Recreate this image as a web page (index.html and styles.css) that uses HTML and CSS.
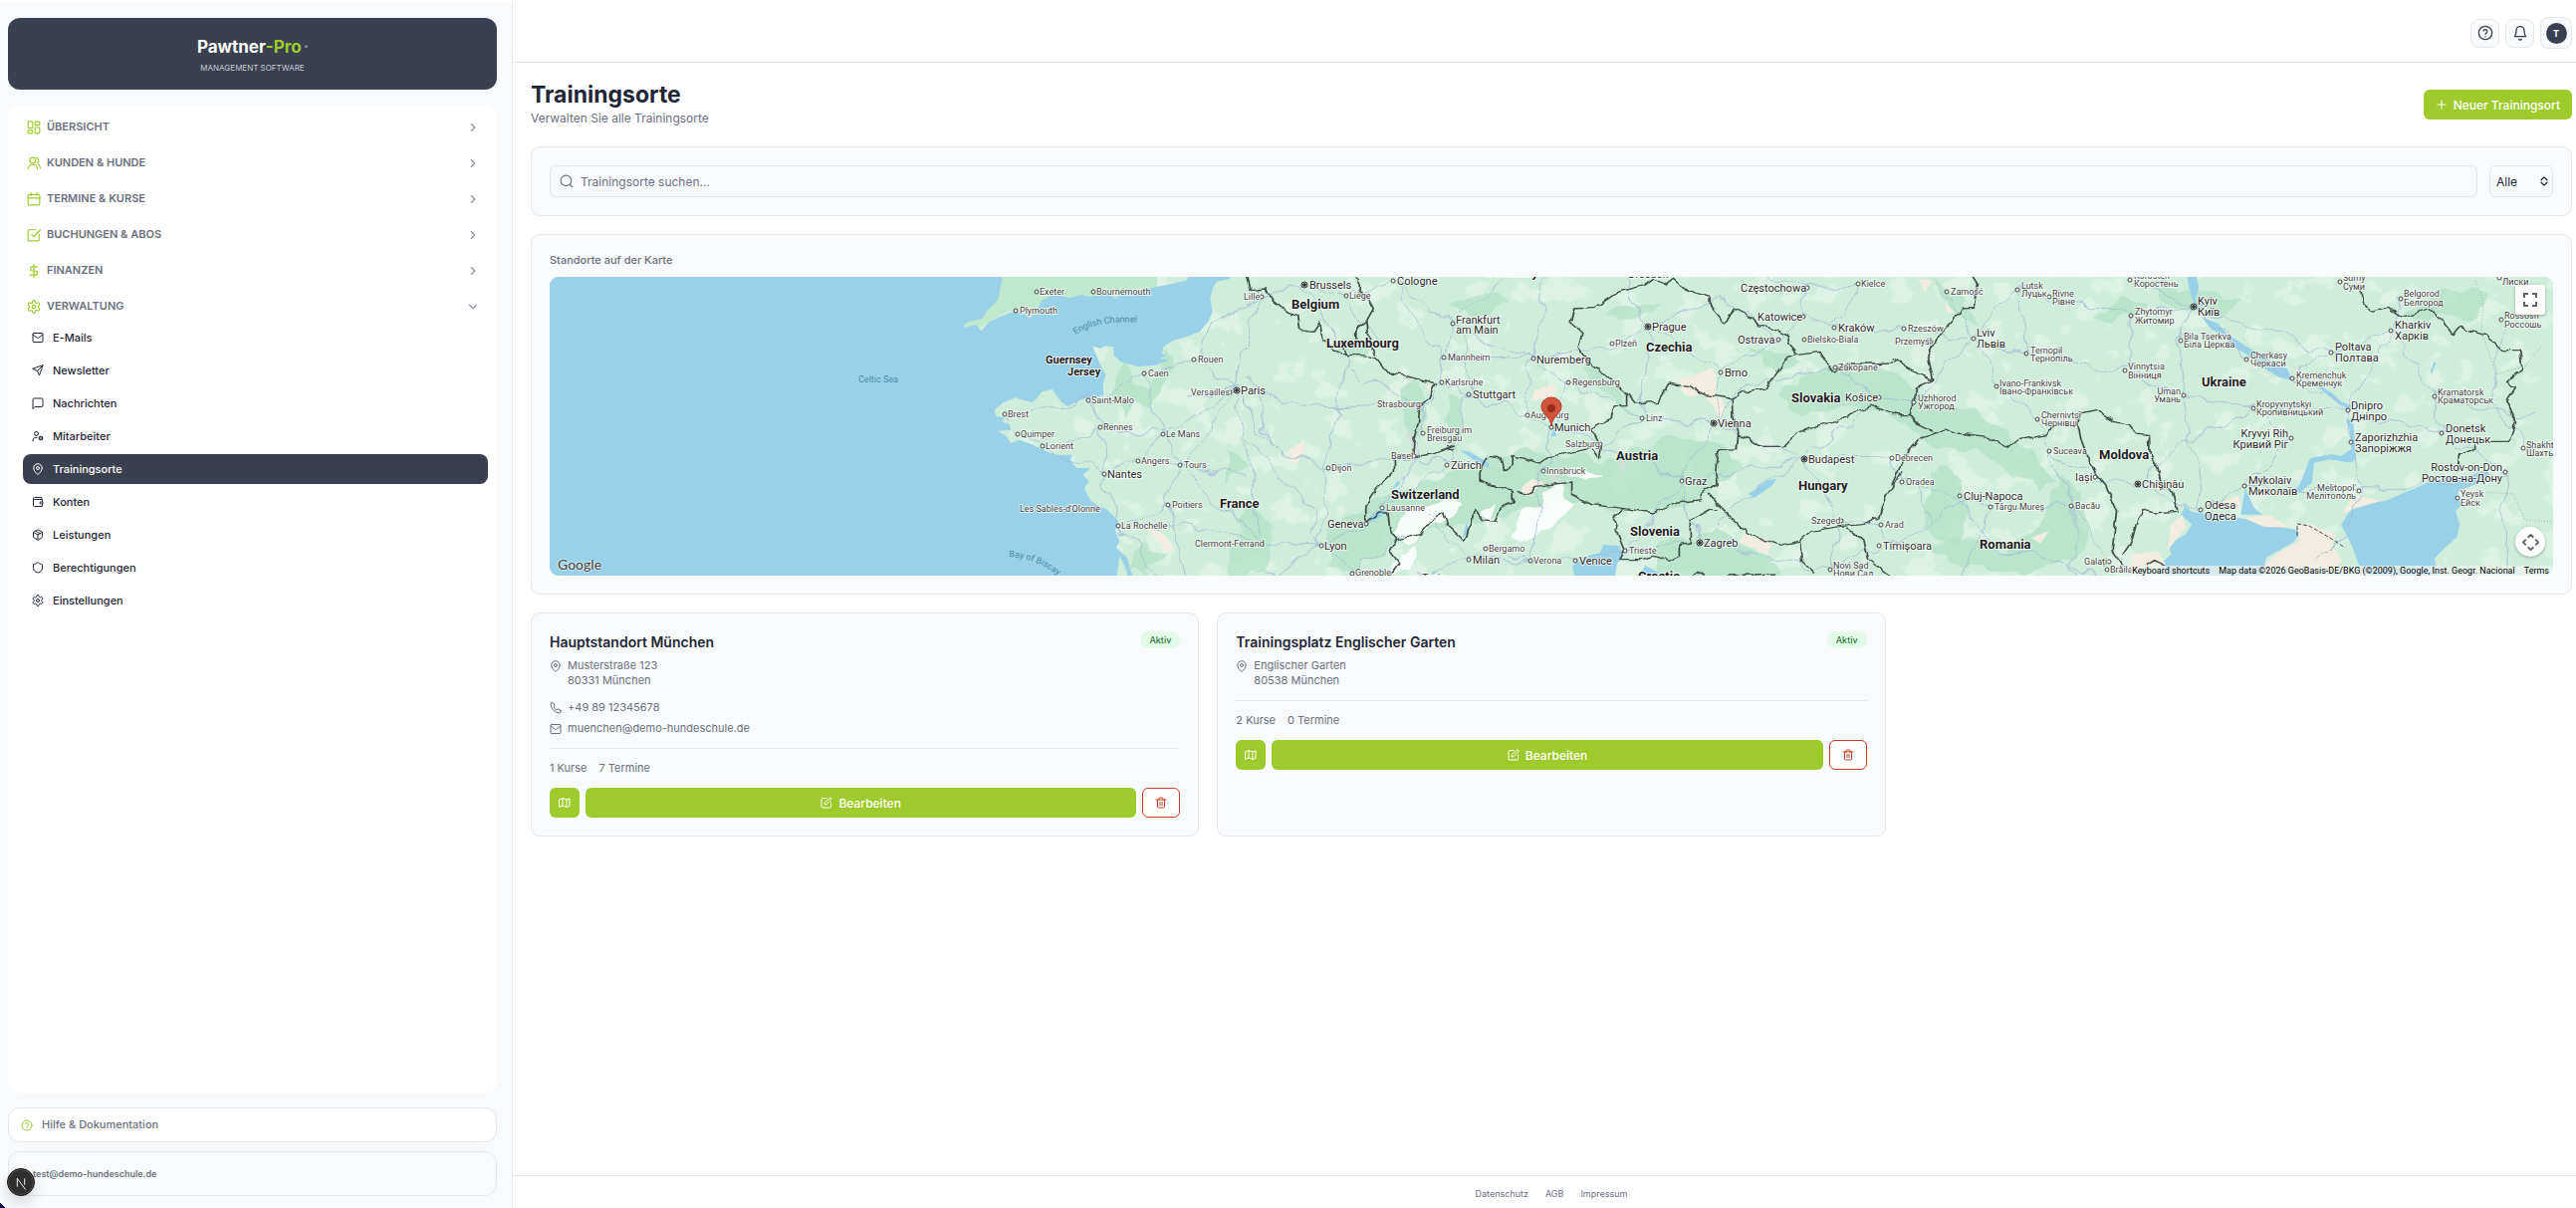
FILE: index.html
```html
<!DOCTYPE html>
<html lang="de">
<head>
<meta charset="utf-8">
<meta name="viewport" content="width=device-width, initial-scale=1">
<title>Trainingsorte – Pawtner-Pro</title>
<link rel="stylesheet" href="styles.css">
</head>
<body>
<svg class="sprite" aria-hidden="true">
  <symbol id="i-dashboard" viewBox="0 0 24 24"><rect x="2" y="2" width="8" height="11" rx="1"/><rect x="14" y="2" width="8" height="6" rx="1"/><rect x="14" y="12" width="8" height="10" rx="1"/><rect x="2" y="17" width="8" height="5" rx="1"/></symbol>
  <symbol id="i-users" viewBox="0 0 24 24"><path d="M18 22a8 8 0 0 0-16 0"/><circle cx="10" cy="7" r="5"/><path d="M23 21c0-3.370-2-6.500-4-8M16 2a5 5 0 0 1 2 9"/></symbol>
  <symbol id="i-calendar" viewBox="0 0 24 24"><rect x="2" y="4" width="20" height="18" rx="2"/><path d="M7 1v5M17 1v5M2 10h20"/></symbol>
  <symbol id="i-check" viewBox="0 0 24 24"><path d="M21 11v9a2 2 0 0 1-2 2H4a2 2 0 0 1-2-2V5a2 2 0 0 1 2-2h12"/><path d="m8 11 4 4L23 3"/></symbol>
  <symbol id="i-dollar" viewBox="0 0 24 24"><path d="M12 1v22M18 5H9.500a3.500 3.500 0 0 0 0 7h5a3.500 3.500 0 0 1 0 7H5"/></symbol>
  <symbol id="i-gear" viewBox="0 0 24 24"><path d="M12.220 1h-.440a2 2 0 0 0-2 2v.8a2 2 0 0 1-1 1.730l-.430.250a2 2 0 0 1-2 0l-.6-.3a2 2 0 0 0-2.730.730l-.5.9a2 2 0 0 0 .730 2.730l.5.3a2 2 0 0 1 1 1.720v.510a2 2 0 0 1-1 1.740l-.5.3a2 2 0 0 0-.730 2.730l.5.9a2 2 0 0 0 2.730.730l.6-.3a2 2 0 0 1 2 0l.430.250a2 2 0 0 1 1 1.730V21a2 2 0 0 0 2 2h.440a2 2 0 0 0 2-2v-.8a2 2 0 0 1 1-1.730l.430-.250a2 2 0 0 1 2 0l.6.3a2 2 0 0 0 2.730-.730l.5-.9a2 2 0 0 0-.730-2.730l-.5-.3a2 2 0 0 1-1-1.740v-.5a2 2 0 0 1 1-1.740l.5-.3a2 2 0 0 0 .730-2.730l-.5-.9a2 2 0 0 0-2.730-.730l-.6.3a2 2 0 0 1-2 0l-.430-.250a2 2 0 0 1-1-1.730V3a2 2 0 0 0-2-2z"/><circle cx="12" cy="12" r="3"/></symbol>
  <symbol id="i-mail" viewBox="0 0 24 24"><rect x="2" y="3" width="20" height="18" rx="2"/><path d="m2 6 8.500 6.500a2.500 2.500 0 0 0 3 0L22 6"/></symbol>
  <symbol id="i-send" viewBox="0 0 24 24"><path d="M22 2 15 22l-4-9-9-4zM22 2 11 13"/></symbol>
  <symbol id="i-message" viewBox="0 0 24 24"><path d="M22 17a2 2 0 0 1-2 2H6l-4 4V4a2 2 0 0 1 2-2h16a2 2 0 0 1 2 2z"/></symbol>
  <symbol id="i-usercog" viewBox="0 0 24 24"><circle cx="9" cy="7" r="4"/><path d="M10 15H7a5 5 0 0 0-5 5v2"/><circle cx="18" cy="16" r="3"/><path d="M18 12v1M18 19v1M22 16h-1M15 16h-1M21 13l-1 1M16 18l-1 1M15 13l1 1M20 18l1 1"/></symbol>
  <symbol id="i-pin" viewBox="0 0 24 24"><path d="M20.500 10c0 5.500-5.500 10.500-7.600 12.400a1.500 1.500 0 0 1-1.800 0C9 20.500 3.500 15.500 3.500 10a8.500 8.500 0 0 1 17 0"/><circle cx="12" cy="10" r="3"/></symbol>
  <symbol id="i-wallet" viewBox="0 0 24 24"><path d="M20 7V4a1 1 0 0 0-1-1H5a2 2 0 0 0 0 4h15a1 1 0 0 1 1 1v4h-3a2 2 0 0 0 0 4h3a1 1 0 0 0 1-1v-2a1 1 0 0 0-1-1"/><path d="M3 5v14a2 2 0 0 0 2 2h15a1 1 0 0 0 1-1v-4"/></symbol>
  <symbol id="i-box" viewBox="0 0 24 24"><path d="M21 8a2 2 0 0 0-1-1.730l-7-4a2 2 0 0 0-2 0l-7 4A2 2 0 0 0 3 8v8a2 2 0 0 0 1 1.730l7 4a2 2 0 0 0 2 0l7-4A2 2 0 0 0 21 16zM3.300 7 12 12l8.700-5M12 22V12M7.500 4.300l9 5.100"/></symbol>
  <symbol id="i-shield" viewBox="0 0 24 24"><path d="M21 13c0 5-3.500 7.500-8.500 9a1 1 0 0 1-1 0C6.500 20.500 3 18 3 13V6a1 1 0 0 1 1-1c2 0 5-1.200 7-3a1.200 1.200 0 0 1 2 0c2 1.800 5 3 7 3a1 1 0 0 1 1 1z"/></symbol>
  <symbol id="i-help" viewBox="0 0 24 24"><circle cx="12" cy="12" r="10"/><path d="M9 9a3 3 0 0 1 5.800 1c0 2-2.800 2.500-2.800 4M12 17.500v.1"/></symbol>
  <symbol id="i-bell" viewBox="0 0 24 24"><path d="M10 21.500a2.200 2.200 0 0 0 4 0M3.500 17.500h17c-.8-1.200-2.500-2.500-2.500-9a6 6 0 0 0-12 0c0 6.500-1.700 7.800-2.500 9z"/></symbol>
  <symbol id="i-search" viewBox="0 0 24 24"><circle cx="11" cy="11" r="9"/><path d="m22 22-4-4"/></symbol>
  <symbol id="i-right" viewBox="0 0 24 24"><path d="m9 18 6-6-6-6"/></symbol>
  <symbol id="i-down" viewBox="0 0 24 24"><path d="m6 9 6 6 6-6"/></symbol>
  <symbol id="i-updown" viewBox="0 0 24 24"><path d="m5 9 7-7 7 7M5 15l7 7 7-7"/></symbol>
  <symbol id="i-plus" viewBox="0 0 24 24"><path d="M12 4v16M4 12h16"/></symbol>
  <symbol id="i-phone" viewBox="0 0 24 24"><path d="M22 17v3a2 2 0 0 1-2.200 2A19.800 19.800 0 0 1 2 4.200 2 2 0 0 1 4 2h3a2 2 0 0 1 2 1.700c.1 1 .4 1.900.7 2.800a2 2 0 0 1-.450 2.100L8 9.900a16 16 0 0 0 6 6l1.300-1.300a2 2 0 0 1 2.100-.4c.9.3 1.800.6 2.800.7A2 2 0 0 1 22 17z"/></symbol>
  <symbol id="i-map" viewBox="0 0 24 24"><path d="M2 5.500 8 3l8 3 6-2.500v15L16 21l-8-3-6 2.500zM8 3v15M16 6v15"/></symbol>
  <symbol id="i-edit" viewBox="0 0 24 24"><path d="M12 3H4a2 2 0 0 0-2 2v15a2 2 0 0 0 2 2h15a2 2 0 0 0 2-2v-8"/><path d="M18.500 2.500a2 2 0 0 1 3 3L12.500 15 8 16l1-4.500z"/></symbol>
  <symbol id="i-trash" viewBox="0 0 24 24"><path d="M2 6h20M19 6v14a2 2 0 0 1-2 2H7a2 2 0 0 1-2-2V6M8 6V4a2 2 0 0 1 2-2h4a2 2 0 0 1 2 2v2M10 11v6M14 11v6"/></symbol>
</svg>

<div class="app">
  <aside class="sidebar">
    <a class="brand" href="#">
      <span class="brand-name">Pawtner<span class="brand-accent">-Pro</span><sup>®</sup></span>
      <span class="brand-sub">MANAGEMENT SOFTWARE</span>
    </a>
    <nav class="nav">
      <button class="group" type="button"><svg class="icon"><use href="#i-dashboard"/></svg><span>ÜBERSICHT</span><svg class="icon chev"><use href="#i-right"/></svg></button>
      <button class="group" type="button"><svg class="icon"><use href="#i-users"/></svg><span>KUNDEN &amp; HUNDE</span><svg class="icon chev"><use href="#i-right"/></svg></button>
      <button class="group" type="button"><svg class="icon"><use href="#i-calendar"/></svg><span>TERMINE &amp; KURSE</span><svg class="icon chev"><use href="#i-right"/></svg></button>
      <button class="group" type="button"><svg class="icon"><use href="#i-check"/></svg><span>BUCHUNGEN &amp; ABOS</span><svg class="icon chev"><use href="#i-right"/></svg></button>
      <button class="group" type="button"><svg class="icon"><use href="#i-dollar"/></svg><span>FINANZEN</span><svg class="icon chev"><use href="#i-right"/></svg></button>
      <div class="section">
        <button class="group" type="button" aria-expanded="true"><svg class="icon"><use href="#i-gear"/></svg><span>VERWALTUNG</span><svg class="icon chev"><use href="#i-down"/></svg></button>
        <ul class="items">
          <li><a href="#"><svg class="icon"><use href="#i-mail"/></svg>E-Mails</a></li>
          <li><a href="#"><svg class="icon"><use href="#i-send"/></svg>Newsletter</a></li>
          <li><a href="#"><svg class="icon"><use href="#i-message"/></svg>Nachrichten</a></li>
          <li><a href="#"><svg class="icon"><use href="#i-usercog"/></svg>Mitarbeiter</a></li>
          <li><a href="#" class="active" aria-current="page"><svg class="icon"><use href="#i-pin"/></svg>Trainingsorte</a></li>
          <li><a href="#"><svg class="icon"><use href="#i-wallet"/></svg>Konten</a></li>
          <li><a href="#"><svg class="icon"><use href="#i-box"/></svg>Leistungen</a></li>
          <li><a href="#"><svg class="icon"><use href="#i-shield"/></svg>Berechtigungen</a></li>
          <li><a href="#"><svg class="icon"><use href="#i-gear"/></svg>Einstellungen</a></li>
        </ul>
      </div>
    </nav>
    <div class="side-foot">
      <a class="help" href="#"><svg class="icon"><use href="#i-help"/></svg>Hilfe &amp; Dokumentation</a>
      <div class="user">test@demo-hundeschule.de</div>
    </div>
  </aside>

  <div class="page">
    <header class="topbar">
      <button class="tool" type="button" aria-label="Hilfe"><svg class="icon"><use href="#i-help"/></svg></button>
      <button class="tool" type="button" aria-label="Benachrichtigungen"><svg class="icon"><use href="#i-bell"/></svg></button>
      <button class="tool account" type="button" aria-label="Konto"><span>T</span></button>
    </header>

    <main class="content">
      <div class="heading">
        <div>
          <h1>Trainingsorte</h1>
          <p>Verwalten Sie alle Trainingsorte</p>
        </div>
        <button class="btn primary" type="button"><svg class="icon"><use href="#i-plus"/></svg>Neuer Trainingsort</button>
      </div>

      <section class="card filters">
        <label class="search"><svg class="icon"><use href="#i-search"/></svg><input type="text" placeholder="Trainingsorte suchen..." aria-label="Trainingsorte suchen"></label>
        <label class="choice"><select aria-label="Status"><option>Alle</option><option>Aktiv</option><option>Inaktiv</option></select><svg class="icon"><use href="#i-updown"/></svg></label>
      </section>

      <section class="card map-card">
        <h2>Standorte auf der Karte</h2>
        <div class="map">
          <svg class="map-canvas" viewBox="0 0 2012 300" preserveAspectRatio="xMidYMid slice" role="img" aria-label="Karte der Standorte">
            <defs>
              <filter id="woods" x="0" y="0" width="100%" height="100%">
                <feTurbulence type="fractalNoise" baseFrequency=".030 .036" numOctaves="4" seed="11"/>
                <feColorMatrix values="0 0 0 0 .71  0 0 0 0 .89  0 0 0 0 .78  0 0 0 14 -8.100"/>
              </filter>
              <filter id="jag" x="-2%" y="-2%" width="104%" height="104%">
                <feTurbulence type="fractalNoise" baseFrequency=".12" numOctaves="1" seed="4"/>
                <feDisplacementMap in="SourceGraphic" scale="7" xChannelSelector="R" yChannelSelector="G"/>
              </filter>
              <filter id="wind" x="-2%" y="-2%" width="104%" height="104%">
                <feTurbulence type="fractalNoise" baseFrequency=".04" numOctaves="2" seed="8"/>
                <feDisplacementMap in="SourceGraphic" scale="22" xChannelSelector="R" yChannelSelector="G"/>
              </filter>
              <marker id="town" viewBox="0 0 6 6" markerWidth="6" markerHeight="6" refX="3" refY="3" markerUnits="userSpaceOnUse"><circle cx="3" cy="3" r="2" fill="#fff" stroke="#444" stroke-width="1"/></marker>
              <marker id="capital" viewBox="0 0 8 8" markerWidth="8" markerHeight="8" refX="4" refY="4" markerUnits="userSpaceOnUse"><circle cx="4" cy="4" r="3" fill="#fff" stroke="#333" stroke-width="1"/><circle cx="4" cy="4" r="2" fill="#333"/></marker>
              <path id="channel" d="M528 58Q550 43 590 46"/>
              <path id="biscay" d="M461 281Q490 283 512 301"/>
            </defs>
            <rect width="2012" height="300" fill="#ceeddb"/>
            <rect x="440" width="1572" height="300" filter="url(#woods)"/>
            <path d="M410 0h200v34H460l-50 30z" fill="#bfe8cd"/>

            <!-- mountain forests -->
            <g fill="#afe0c3" fill-opacity=".65" filter="url(#wind)">
              <path d="M930 190l40-18 60 8 40 2 60-22 50 8 14 24-20 16-30 20-60 8-60-10-60 14-60 10-50 18-50 30-30-8 10-40 50-30z"/>
              <path d="M1235 120l30-25 50-8 40 8 40 30 40 10 50 40 30 30-20 12-50-38-60-12-30-24-60-12-40 6z"/>
              <path d="M1520 200l20 30 6 40-30 20-40 6-60-4-30-20 20-12 50 12 40-20z"/>
              <path d="M1390 190l30 14 6 40-20 26-26-20z"/>
              <path d="M1060 40l24-14 30 2-30 16zM1040 80l30 30 20 28-20-8-30-32zM900 30l40-18 20 14-30 20zM855 110l20-10 4 50-14 20zM905 120l14 4-6 50-14-10z"/>
              <path d="M1110 265l60-10 60 30 10 20h-130zM1200 70l40 6 20 16-40-4zM795 60l30 4-6 20-20-6z"/>
              <path d="M560 120l40-10 20-40 6 20-20 44zM680 170l20 20-20 20zM590 270l30 10-20 20h-20zM700 230l26 20-6 50h-40zM575 84l20 30-16 30-14-30z"/>
              <path d="M1620 10l80 14-20 14-60-10zM1550 40l30-20 30 10-40 16zM1390 0l30 20 14 30-24-12zM1860 40l40-30 50 8-20 24z"/>
            </g>
            <!-- alpine relief -->
            <g filter="url(#wind)">
              <path fill="#fff" fill-opacity=".85" d="M858 240l40-18 18 6-20 20-34 20-14-8zM965 255l20-20 30-26 10 20-20 20-24 20zM930 234l18-8-8 28zM1020 198l16-6 20 8-20 8zM850 276l20-8-8 30h-14z"/>
              <path fill="#f3ece0" d="M972 215l20-14 8 12-14 10zM1130 104l30-8 16 12-10 22-22-14zM1160 124l20-6 4 16-14 10zM992 112l20-2-6 12-12 2zM598 254l14 2 16 16-14 6zM1200 256l30 14-10 8-26-14zM738 176l18-8-8 16zM880 104l12 2-6 8z"/>
              <path fill="#d9dcdd" fill-opacity=".7" d="M860 154l8 2 2 24-10-4zM1070 190l14 4-8 6zM1002 196l14 8-12 6z"/>
            </g>

            <!-- seas and lakes -->
            <g fill="#99d1e8">
              <path transform="translate(-12 -18) scale(.44 .3333)" d="M-10 44H1062L1055 95 1050 125 1025 155 1015 180 985 188 970 200 975 207 1000 198 1012 217 1022 203 1030 190 1055 175 1085 160 1110 165 1125 178 1130 165 1142 150 1150 125 1170 112 1190 110 1215 118 1240 108 1260 114 1275 110 1300 100 1318 120 1330 108 1345 92 1380 97 1410 85 1440 77 1480 65 1490 44H1580V60L1550 68 1540 90 1535 120 1540 160 1530 190 1510 220 1480 235 1450 245 1428 265 1425 285 1435 290 1420 300 1440 306 1410 320 1370 325 1330 310 1315 290 1315 265 1295 262 1285 270 1265 262 1275 290 1285 320 1296 350 1290 380 1292 412 1250 420 1230 430 1210 445 1195 430 1182 408 1175 393 1150 400 1140 420 1128 432 1110 425 1090 418 1060 435 1043 455 1045 475 1065 477 1060 490 1078 500 1080 515 1050 518 1070 535 1080 555 1100 545 1130 560 1155 575 1180 590 1220 590 1215 605 1230 630 1262 630 1245 650 1258 670 1248 690 1260 725 1280 745 1300 755 1325 790 1318 820 1328 850 1320 870 1345 900 1362 975H1352L1340 925 1328 895 1320 975H-10z"/>
              <path d="M1029 300l-2-10 16-10 12-3 3-8 16 1 4 10-6 8-2 12zM1094 300l6-10 12 6 4 4z"/>
              <path d="M1204 218l20-14 8-1-4 6-18 13zM818 247l14-12 12-1-8 6-10 6zM914 174l10 2 18 10 2 6-10-4zM846 214l6-10 2 4zM917 262l4-16 2 10zM1005 160l4-8 2 8z"/>
              <path transform="translate(1348 -18) scale(.438 .3333)" d="M663 770l25 30-15 30-40 30 8 30-18 20 5 60h220l10-70 60-45 24-35-40-10-50-12-45-16-120-20-14-18zM1030 800l20-40 30-25 50-5 70-40 42-24 30-6 60-8 30-18 10 20-22 18-50 28-6 20 14 20-16 20 10 38-6 40-30 34-22 30 10 70-150-10-30-30-20-70zM935 680l24-80 50-12 20 6 24-20-3-60-9-28 16-6 7 120-10 14-50-10-36 10-5 60-28 30-16-6zM1046 452l-20-16-26-26-20-20-16-6 16-4 30 24 20 26 24 12zM918 365l-30-8-32-26-12-16-40-35-25-20-16-28-30-20-25-40-14-30-14-60-4-38h20l8 40-8 40 12 50 40 20 20 32 20 16 30 26 40 26 18 22 30 14zM800 770l10-80 20 60 20 20zM1235 340l8-30 4 4-10 34z"/>
            </g>
            <g fill="#f3ece0">
              <path transform="translate(1348 -18) scale(.438 .3333)" d="M850 930l30-40 55-42-6-46 30-4 60 34-10 30 24 50-20 20zM740 740l54-26 8 36-54 4zM806 780l60-10 46 40-60-4zM1030 770l30-60 60 20-60 22zM632 880l8-80 26-28 8 36-30 50zM548 890l60-10 20 40-80 12zM320 840l40-22-20 40zM60 60l32 6-16 34zM120 130l24 30-16 6zM840 335l26 16-4 6z"/>
            </g>

            <!-- roads -->
            <g class="roads" filter="url(#wind)">
              <path d="M690 114L647 83 597 97 541 124M690 114L616 158 553 151 495 170M616 158L591 185 557 198 553 151 541 124M597 97L616 158 633 189 621 229 571 250 557 198M690 114L633 189M621 229L640 300M571 250L610 300M591 185L633 189 700 200M690 114L700 60 715 20 758 8 800 19 847 4M690 114L760 130 874 128M690 114L730 170 782 192 775 270 820 248M690 114L715 268 775 270 806 298M647 83L670 40 715 20M690 114L640 120M457 138L541 124M457 138L470 158 495 170 557 198M715 268L640 250 571 250M633 189L690 240 715 268M757 8L790 60 800 90 870 128M782 192L868 180M782 192L800 90"/>
              <path d="M847 4L907 47 898 81 896 106 923 118 982 139 1006 150M907 47L988 82 982 139M898 81L988 82 1023 106 1097 142 1169 147 1260 183M896 106L874 128 877 157 868 180 901 189 836 232 820 248M923 118L901 189M1006 150L1055 168 1097 142M1006 150L998 195 985 285 923 284 870 300M1055 168L1137 205 1169 147 1176 96 1103 50 1067 67 988 82M1103 50L1080 0M1176 96L1234 63 1259 40 1290 51 1360 52 1430 62M1259 40L1263 11 1314 7 1290 51M1137 205L1155 267 1080 275 1030 285 985 285M1155 267L1286 293 1335 270 1337 249 1297 245 1260 183 1348 182 1358 206 1417 220M1260 183L1137 205M1260 183L1335 121 1290 91M1155 267L1204 218 1260 183M1103 50L1097 142M907 47L960 0M847 4L880 60 898 81M1080 275L1137 205M868 180L836 232M923 284L880 240M988 82L1000 0M923 118L920 60 907 47M1263 11L1220 0M1234 63L1180 20 1103 50M1297 245L1286 293M1169 147L1200 110 1290 91M775 270L720 300M806 298L860 260M940 273L985 285M830 60L800 19M1023 106L1006 150M700 160L760 230 775 270M730 170L700 100"/>
              <path d="M1430 62L1474 13 1506 20 1588 39 1653 30 1637 64 1640 119 1660 234M1653 30L1588 3M1653 30L1705 83 1750 102 1808 134 1811 166 1819 215M1653 30L1720 54 1791 76 1851 54 1858 22M1851 54L1893 120 1902 157 1967 196M1851 54L1808 134 1902 157M1430 62L1484 77 1583 94 1640 119 1711 132 1808 134M1430 62L1454 110 1495 143 1507 175 1553 201 1596 208 1660 234 1703 210 1751 162 1711 132M1596 208L1640 170 1711 132M1703 210L1819 215 1967 196M1417 220L1448 231 1529 230 1507 175M1417 220L1390 250 1335 270M1417 220L1450 270 1560 300M1529 230L1567 286M1370 126L1430 62M1370 126L1335 121M1484 77L1474 13M1583 94L1588 39M1403 15L1430 62M1819 215L1800 260 1770 290M1791 76L1750 102M1967 196L1960 300M1985 172L1950 120 1963 43M1893 120L1990 140M1390 250L1370 206M1530 230L1530 300M1448 231L1420 300"/>
            </g>
            <!-- national borders -->
            <g class="borders" filter="url(#jag)">
              <path transform="translate(668 -18) scale(.44 .3333)" d="M70 44L80 95 115 90 135 130 165 160 190 170 195 215 225 220 240 190 245 240 290 290 340 290 370 300 395 345 430 350 505 378 490 420 468 440 465 490 455 540 452 590 410 600 410 640 370 690 345 740 345 798 375 765 395 765 400 820 415 845 470 830 500 780 522 762 530 800 570 850 585 800 592 755 610 785 640 790 655 745 680 735 680 700 640 685 605 670 605 640 620 600M310 44L330 60 330 95 350 120 362 150 345 190 320 215 320 245M345 190L350 240 365 290M290 250L300 290M455 595L500 588 525 575 545 560M545 575L530 565M620 595L655 600 660 635 680 620 680 592 740 615 765 595 815 583 860 570 878 605 882 565 860 510 905 480 912 440 940 440 940 405 910 370 860 320 830 270 838 220 812 190 820 150 870 145 920 100 980 80 1000 60 1030 75 1045 60 1080 95 1130 115 1130 140 1165 195 1185 150 1230 180 1240 200 1275 210 1305 230 1310 260 1330 290 1305 298 1275 360 1255 390 1205 400 1180 420M940 405L960 435 1010 430 1035 375 1080 385 1120 410 1180 420 1182 470 1195 520 1192 572 1150 575 1145 640 1148 680 1110 705 1110 725 1055 735 1000 765 935 752 860 740 815 710 815 672 730 685 720 710 690 700M1195 525L1240 565 1300 565 1330 525 1380 500 1420 490 1450 465 1500 445 1568 475M1330 290L1380 280 1410 340 1450 315 1500 315 1568 310M1130 705L1160 760 1220 830 1290 862 1335 850 1360 820 1430 805 1480 800 1515 780 1530 720 1568 640M935 752L910 780 920 830 935 880 925 905 975 905 1000 895 1040 910 1060 895 1060 860 1085 855 1085 790 1130 755 1150 755M1335 850L1340 910 1370 950M1440 810L1480 850 1490 905 1540 954M415 845L400 880 420 915 400 954M1090 954L1100 940 1120 954M1170 954L1280 948"/>
              <path transform="translate(1348 -18) scale(.438 .3333)" d="M180 44L195 75 188 148 165 150 110 230 82 290 95 365 60 345 0 300M95 365L65 380 45 430 42 470 0 470M42 470L60 500 100 525 60 545 30 590 0 680M100 525L120 510 150 525 220 535 265 570 290 545 355 530 370 500 425 500 432 465 470 455 510 490 545 500 560 525 590 530 592 590 610 630 618 690 645 700 655 760 600 765 575 755 560 800 550 850 530 890M425 500L440 570 465 640 490 680 515 760 505 880 530 924M1075 90L1078 130 1100 160 1135 145 1170 175 1230 150 1250 165 1285 230 1300 205 1360 230 1400 275 1440 275 1445 330 1410 370 1430 390 1410 430 1430 490 1415 550 1370 550M1335 560L1335 575 1300 590 1298 640M580 924L600 908 625 924"/>
            </g>
            <path class="disputed" d="M1755 260l0-12 12 2 14 8 10 6 12 8"/>
            <path class="disputed faint" d="M1934 4l8 20-2 30 10 30 4 14 30-8 16-20M1928 222l14-6 30 2 12 26 28 2"/>

            <path class="towns" d="M489 15L546 15 468 34 647 83 597 97 541 124 457 138 470 158 553 151 616 158 683 116 495 170 591 185 633 189 557 198 549 233 621 229 571 250 715 268 715 20 800 19 847 4 907 47 898 81 988 82 896 106 1023 106 923 118 874 128 982 139 1006 151 877 157 1055 168 868 180 901 189 998 195 782 192 836 232 820 248 775 270 940 273 923 284 985 285 1030 285 806 298 1080 275 1137 205 1097 142 1176 96 1067 67 1335 121 1234 63 1260 63 1259 40 1290 51 1263 11 1314 7 1291 91 1297 245 1337 249 1335 270 1286 294 1348 182 1387 65 1403 15 1474 13 1506 20 1587 3 1588 39 1360 52 1430 62 1483 77 1638 64 1704 83 1582 94 1453 110 1641 119 1750 102 1789 76 1849 54 1859 22 1798 5 1958 1 1960 43 1711 132 1806 134 1893 120 1749 162 1809 166 1900 157 1982 172 1964 196 1916 222 1817 215 1702 210 1658 234 1552 201 1506 175 1494 143 1370 126 1358 206 1416 220 1447 231 1528 230 1566 286 1564 294"/>
            <path class="capitals" d="M690 114L758 8 1103 50 1169 147 1260 183 1155 267 1651 30 1595 208"/>

            <g class="sea">
              <text x="310" y="106">Celtic Sea</text>
              <text><textPath href="#channel">English Channel</textPath></text>
              <text><textPath href="#biscay">Bay of Biscay</textPath></text>
            </g>
            <g class="small">
              <text x="492" y="18">Exeter</text><text x="549" y="18">Bournemouth</text><text x="472" y="37">Plymouth</text>
              <text x="651" y="86">Rouen</text><text x="601" y="100">Caen</text><text x="544" y="127">Saint-Malo</text><text x="460" y="141">Brest</text>
              <text x="473" y="161">Quimper</text><text x="556" y="154">Rennes</text><text x="619" y="161">Le Mans</text><text x="644" y="119">Versailles</text>
              <text x="498" y="173">Lorient</text><text x="594" y="188">Angers</text><text x="637" y="192">Tours</text><text x="472" y="236">Les Sables-d'Olonne</text>
              <text x="625" y="232">Poitiers</text><text x="574" y="253">La Rochelle</text><text x="648" y="271">Clermont-Ferrand</text>
              <text x="697" y="23">Lille</text><text x="803" y="22">Liège</text><text x="902" y="84">Mannheim</text><text x="899" y="109">Karlsruhe</text>
              <text x="1027" y="109">Regensburg</text><text x="831" y="131">Strasbourg</text><text x="985" y="142">Augsburg</text>
              <text x="881" y="157">Freiburg im<tspan x="881" dy="8">Breisgau</tspan></text><text x="1020" y="171">Salzburg</text><text x="845" y="183">Basel</text>
              <text x="1001" y="198">Innsbruck</text><text x="785" y="195">Dijon</text><text x="840" y="235">Lausanne</text><text x="943" y="276">Bergamo</text>
              <text x="988" y="288">Verona</text><text x="809" y="300">Grenoble</text><text x="1084" y="278">Trieste</text><text x="1101" y="145">Linz</text>
              <text x="1070" y="70">Plzeň</text><text x="1263" y="66">Bielsko-Biala</text><text x="1317" y="10">Kielce</text><text x="1294" y="94">Zakopane</text>
              <text x="1267" y="248">Szeged</text><text x="1341" y="252">Arad</text><text x="1289" y="293">Novi Sad<tspan x="1289" dy="8">Нови Сад</tspan></text>
              <text x="1351" y="185">Debrecen</text><text x="1351" y="68">Przemyśl</text><text x="1407" y="18">Zamość</text><text x="1364" y="55">Rzeszów</text>
              <text x="1478" y="12">Lutsk<tspan x="1478" dy="8">Луцьк</tspan></text><text x="1509" y="20">Rivne<tspan x="1509" dy="8">Рівне</tspan></text>
              <text x="1591" y="2">Korosten<tspan x="1591" dy="8">Коростень</tspan></text><text x="1592" y="38">Zhytomyr<tspan x="1592" dy="9">Житомир</tspan></text>
              <text x="1487" y="77">Ternopil<tspan x="1487" dy="8">Тернопіль</tspan></text><text x="1641" y="63">Bila Tserkva<tspan x="1641" dy="8">Біла Церква</tspan></text>
              <text x="1708" y="82">Cherkasy<tspan x="1708" dy="8">Черкаси</tspan></text><text x="1585" y="93">Vinnytsia<tspan x="1585" dy="9">Вінниця</tspan></text>
              <text x="1456" y="110">Ivano-Frankivsk<tspan x="1456" dy="8">Івано-Франківськ</tspan></text><text class="end" x="1638" y="118">Uman<tspan x="1638" dy="8">Умань</tspan></text>
              <text x="1754" y="102">Kremenchuk<tspan x="1754" dy="8">Кременчук</tspan></text><text x="1862" y="20">Belgorod<tspan x="1862" dy="9">Белгород</tspan></text>
              <text x="1801" y="4">Sumy<tspan x="1801" dy="9">Суми</tspan></text><text x="1961" y="8">Лиски</text><text x="1963" y="42">Rossosh<tspan x="1963" dy="9">Россошь</tspan></text>
              <text x="1714" y="131">Kropyvnytskyi<tspan x="1714" dy="8">Кропивницький</tspan></text><text x="1896" y="119">Kramatorsk<tspan x="1896" dy="8">Краматорськ</tspan></text>
              <text x="1985" y="172">Shakhty<tspan x="1985" dy="8">Шахты</tspan></text><text x="1919" y="221">Yeysk<tspan x="1919" dy="9">Ейск</tspan></text>
              <text class="end" x="1814" y="215">Melitopol'<tspan x="1814" dy="8">Мелітополь</tspan></text><text x="1510" y="178">Suceava</text>
              <text x="1498" y="142">Chernivtsi<tspan x="1498" dy="8">Чернівці</tspan></text><text x="1374" y="125">Uzhhorod<tspan x="1374" dy="8">Ужгород</tspan></text>
              <text x="1362" y="209">Oradea</text><text x="1451" y="234">Târgu Mureș</text><text x="1532" y="233">Bacău</text><text x="1541" y="289">Galați</text><text x="1567" y="297">Brăila</text>
            </g>
            <g class="medium">
              <text x="560" y="202">Nantes</text><text x="694" y="118">Paris</text><text x="763" y="12">Brussels</text><text x="851" y="8">Cologne</text>
              <text x="910" y="47">Frankfurt<tspan x="910" dy="10">am Main</tspan></text><text x="991" y="87">Nuremberg</text><text x="927" y="122">Stuttgart</text><text x="1009" y="155">Munich</text>
              <text x="905" y="193">Zürich</text><text x="781" y="252">Geneva</text><text x="778" y="274">Lyon</text><text x="927" y="288">Milan</text><text x="1034" y="289">Venice</text>
              <text x="876" y="306">Turin</text><text x="1159" y="271">Zagreb</text><text x="1140" y="209">Graz</text><text x="1264" y="187">Budapest</text><text x="1173" y="151">Vienna</text>
              <text x="1180" y="100">Brno</text><text x="1107" y="54">Prague</text><text x="1301" y="125">Košice</text><text x="1193" y="67">Ostrava</text><text x="1213" y="44">Katowice</text>
              <text x="1294" y="55">Kraków</text><text x="1196" y="15">Częstochowa</text><text x="1339" y="274">Timișoara</text><text x="1083" y="1">Dresden</text>
              <text x="1655" y="28">Kyiv<tspan x="1655" dy="11">Київ</tspan></text><text x="1433" y="60">Lviv<tspan x="1433" dy="11">Львів</tspan></text>
              <text x="1793" y="74">Poltava<tspan x="1793" dy="11">Полтава</tspan></text><text x="1853" y="52">Kharkiv<tspan x="1853" dy="11">Харків</tspan></text>
              <text x="1809" y="133">Dnipro<tspan x="1809" dy="11">Дніпро</tspan></text><text class="end" x="1746" y="161">Kryvyi Rih<tspan x="1746" dy="11">Кривий Ріг</tspan></text>
              <text x="1813" y="165">Zaporizhzhia<tspan x="1813" dy="11">Запоріжжя</tspan></text><text x="1904" y="156">Donetsk<tspan x="1904" dy="11">Донецьк</tspan></text>
              <text class="end" x="1961" y="195">Rostov-on-Don<tspan x="1961" dy="11">Ростов-на-Дону</tspan></text><text x="1706" y="208">Mykolaiv<tspan x="1706" dy="11">Миколаїв</tspan></text>
              <text x="1662" y="233">Odesa<tspan x="1662" dy="11">Одеса</tspan></text><text x="1599" y="212">Chișinău</text><text x="1532" y="205">Iași</text><text x="1420" y="224">Cluj-Napoca</text>
            </g>
            <g class="country">
              <text x="745" y="32">Belgium</text><text x="780" y="71">Luxembourg</text><text x="845" y="223">Switzerland</text><text x="1071" y="184">Austria</text>
              <text x="673" y="232">France</text><text x="1085" y="260">Slovenia</text><text x="1093" y="305">Croatia</text><text x="1254" y="214">Hungary</text><text x="1101" y="75">Czechia</text>
              <text x="1247" y="126">Slovakia</text><text x="1659" y="110">Ukraine</text><text x="1556" y="183">Moldova</text><text x="1436" y="273">Romania</text><text x="940" y="0">Germany</text>
              <text x="498" y="87" class="isle">Guernsey</text><text x="520" y="99" class="isle">Jersey</text>
            </g>
            <path d="M1006 150c-1-11-10-12-10-20a10 9 0 0 1 20 0c0 8-9 9-10 20z" fill="#d0533a" stroke="#b23a26" stroke-width="1"/>
            <circle cx="1006" cy="132" r="4" fill="#992b1b"/>
          </svg>
          <span class="map-logo">Google</span>
          <button class="map-btn full" type="button" aria-label="Vollbild"><svg viewBox="0 0 14 14"><path d="M1 5V1h4M9 1h4v4M13 9v4H9M5 13H1V9"/></svg></button>
          <button class="map-btn move" type="button" aria-label="Kamerasteuerung"><svg viewBox="0 0 18 18"><path d="m6 4 3-3 3 3M6 14l3 3 3-3M4 6 1 9l3 3M14 6l3 3-3 3"/></svg></button>
          <div class="map-legal"><button type="button">Keyboard shortcuts</button><span>Map data ©2026 GeoBasis-DE/BKG (©2009), Google, Inst. Geogr. Nacional</span><a href="#">Terms</a></div>
        </div>
      </section>

      <div class="places">
        <article class="card place">
          <div class="place-head"><h3>Hauptstandort München</h3><span class="badge">Aktiv</span></div>
          <div class="line address"><svg class="icon"><use href="#i-pin"/></svg><span>Musterstraße 123<br>80331 München</span></div>
          <div class="contact">
            <div class="line"><svg class="icon"><use href="#i-phone"/></svg><span>+49 89 12345678</span></div>
            <div class="line"><svg class="icon"><use href="#i-mail"/></svg><span>muenchen@demo-hundeschule.de</span></div>
          </div>
          <div class="stats"><span>1 Kurse</span><span>7 Termine</span></div>
          <div class="actions">
            <button class="btn primary square" type="button" aria-label="Karte"><svg class="icon"><use href="#i-map"/></svg></button>
            <button class="btn primary wide" type="button"><svg class="icon"><use href="#i-edit"/></svg>Bearbeiten</button>
            <button class="btn danger" type="button" aria-label="Löschen"><svg class="icon"><use href="#i-trash"/></svg></button>
          </div>
        </article>
        <article class="card place">
          <div class="place-head"><h3>Trainingsplatz Englischer Garten</h3><span class="badge">Aktiv</span></div>
          <div class="line address"><svg class="icon"><use href="#i-pin"/></svg><span>Englischer Garten<br>80538 München</span></div>
          <div class="stats"><span>2 Kurse</span><span>0 Termine</span></div>
          <div class="actions">
            <button class="btn primary square" type="button" aria-label="Karte"><svg class="icon"><use href="#i-map"/></svg></button>
            <button class="btn primary wide" type="button"><svg class="icon"><use href="#i-edit"/></svg>Bearbeiten</button>
            <button class="btn danger" type="button" aria-label="Löschen"><svg class="icon"><use href="#i-trash"/></svg></button>
          </div>
        </article>
      </div>
    </main>

    <footer class="footer"><a href="#">Datenschutz</a><a href="#">AGB</a><a href="#">Impressum</a></footer>
  </div>
</div>

<span class="corner"></span>
<button class="devtools" type="button" aria-label="Next.js Dev Tools"><svg viewBox="0 0 28 28"><path d="M10 19V10l9 12M18 10v7"/></svg></button>
</body>
</html>
```
FILE: styles.css
```css
:root {
  --green: #9dcb2c;
  --dark: #3b4050;
  --ink: #1f2637;
  --muted: #6b7080;
  --line: #e5e7eb;
  --soft: #f9fafc;
}

* { box-sizing: border-box; }

body {
  margin: 0;
  font-family: Inter, "Liberation Sans", sans-serif;
  font-size: 11px;
  line-height: 15px;
  color: var(--ink);
  background: #fff;
}

h1, h2, h3, p, ul { margin: 0; padding: 0; }
ul { list-style: none; }
a { color: inherit; text-decoration: none; }
button, input, select { font: inherit; color: inherit; }
button { border: 0; background: none; padding: 0; cursor: pointer; }

.sprite { position: absolute; width: 0; height: 0; }

.icon {
  width: 12px;
  height: 12px;
  flex: none;
  fill: none;
  stroke: currentColor;
  stroke-width: 2;
  stroke-linecap: round;
  stroke-linejoin: round;
}

.app { display: flex; min-height: 100vh; }

/* Sidebar */
.sidebar {
  width: 515px;
  flex: none;
  display: flex;
  flex-direction: column;
  gap: 15px;
  padding: 15px 15px 12px 8px;
  border-top: 3px solid #fff;
  border-right: 1px solid var(--line);
  background: var(--soft);
}

.brand {
  display: flex;
  flex-direction: column;
  align-items: center;
  justify-content: center;
  gap: 4px;
  height: 72px;
  border-radius: 12px;
  background: var(--dark);
  color: #fff;
}
.brand-name { display: flex; align-items: center; font-size: 17px; line-height: 24px; font-weight: 700; }
.brand-accent { color: var(--green); }
.brand-name sup { margin-left: 3px; font-size: 5px; line-height: 6px; font-weight: 400; color: #c6cad2; }
.brand-sub { font-size: 8px; line-height: 10px; color: #c6cad2; }

.nav {
  flex: 1;
  display: flex;
  flex-direction: column;
  gap: 3px;
  padding: 6px 9px;
  border-radius: 12px;
  background: #fff;
}
.group {
  display: flex;
  align-items: center;
  gap: 6px;
  width: 100%;
  height: 33px;
  padding: 0 8px 0 10px;
  font-weight: 600;
  color: var(--muted);
  text-align: left;
}
.group .icon { width: 14px; height: 14px; color: var(--green); }
.group .chev { margin-left: auto; color: #8d919c; }
.items { display: flex; flex-direction: column; gap: 3px; margin-left: 6px; }
.items a {
  display: flex;
  align-items: center;
  gap: 9px;
  height: 30px;
  padding: 0 9px;
  border-radius: 8px;
  font-weight: 500;
}
.items .active { background: var(--dark); color: #fff; }

.side-foot { display: flex; flex-direction: column; gap: 9px; }
.help, .user {
  display: flex;
  align-items: center;
  border: 1px solid var(--line);
  border-radius: 12px;
  color: var(--muted);
  font-weight: 500;
}
.help { gap: 9px; height: 35px; padding: 0 12px; background: #fff; }
.help .icon { color: var(--green); }
.user { height: 45px; padding: 0 24px; font-size: 9px; font-weight: 600; }

/* Page */
.page { flex: 1; min-width: 0; display: flex; flex-direction: column; }
.topbar {
  display: flex;
  align-items: center;
  justify-content: flex-end;
  gap: 6px;
  height: 63px;
  padding: 4px 4px 0 18px;
  border-bottom: 1px solid var(--line);
}
.tool {
  display: grid;
  place-items: center;
  width: 29px;
  height: 29px;
  border: 1px solid var(--line);
  border-radius: 8px;
  background: var(--soft);
  color: var(--dark);
}
.tool .icon { width: 16px; height: 16px; }
.account { width: 32px; height: 32px; }
.account span {
  display: grid;
  place-items: center;
  width: 21px;
  height: 21px;
  border-radius: 50%;
  background: var(--dark);
  color: #fff;
  font-size: 9px;
  font-weight: 700;
}

.content {
  flex: 1;
  display: flex;
  flex-direction: column;
  gap: 18px;
  padding: 18px 4px 18px 18px;
}
.heading { display: flex; align-items: center; justify-content: space-between; height: 48px; }
h1 { font-size: 23px; line-height: 28px; font-weight: 700; }
.heading p { font-size: 12px; line-height: 20px; color: var(--muted); }

.btn {
  display: flex;
  align-items: center;
  justify-content: center;
  gap: 6px;
  height: 30px;
  padding: 0 12px;
  border-radius: 6px;
  font-size: 12px;
  font-weight: 500;
}
.primary { background: var(--green); color: #fff; }
.square { width: 30px; padding: 0; }
.wide { flex: 1; }
.danger { width: 38px; border: 1px solid #cc3a24; background: #fff; color: #cc3a24; }

.card {
  padding: 18px;
  border: 1px solid var(--line);
  border-radius: 9px;
  background: var(--soft);
}

.filters { display: flex; gap: 12px; }
.search, .choice {
  display: flex;
  align-items: center;
  height: 32px;
  border: 1px solid var(--line);
  border-radius: 6px;
  font-size: 12px;
}
.search { flex: 1; gap: 7px; padding: 0 9px; color: var(--muted); }
.search .icon { width: 14px; height: 14px; }
.search input { flex: 1; min-width: 0; border: 0; padding: 0; outline: 0; background: none; }
.search input::placeholder { color: var(--muted); opacity: 1; }
.choice { position: relative; width: 64px; }
.choice select { width: 100%; height: 100%; padding: 0 6px; border: 0; outline: 0; appearance: none; background: none; }
.choice .icon { position: absolute; right: 3px; width: 10px; height: 10px; stroke-width: 3; pointer-events: none; }

/* Map */
.map-card h2 { margin-bottom: 9px; font-size: 11px; line-height: 15px; font-weight: 500; color: var(--muted); }
.map {
  position: relative;
  height: 300px;
  overflow: hidden;
  border-radius: 9px;
  background: #99d1e8;
  font-family: Roboto, "Liberation Sans", sans-serif;
}
.map-canvas { display: block; width: 100%; height: 100%; }
.map-canvas text { paint-order: stroke; stroke: rgba(255, 255, 255, .75); stroke-width: 2px; stroke-linejoin: round; }
.map-canvas .end { text-anchor: end; }
.roads { fill: none; stroke: #a3b9d8; stroke-width: 1; stroke-opacity: .8; }
.borders path { fill: none; stroke: #3f4f49; stroke-width: 4; stroke-linejoin: round; }
.disputed { fill: none; stroke: #44524c; stroke-width: 1; stroke-dasharray: 4 2; }
.faint { stroke: #9fb5aa; stroke-dasharray: 1 2; }
.towns { fill: none; marker-start: url(#town); marker-mid: url(#town); marker-end: url(#town); }
.capitals { fill: none; marker-start: url(#capital); marker-mid: url(#capital); marker-end: url(#capital); }
.small { font-size: 9px; fill: #444; }
.medium { font-size: 11px; fill: #2c2c2c; }
.country { font-size: 13px; font-weight: 700; fill: #1d1d1d; }
.country .isle { font-size: 11px; }
.map-canvas .sea text { font-size: 9px; fill: #4a8ca6; stroke: none; }

.map-logo { position: absolute; left: 8px; bottom: 1px; font: 500 14px/20px Lato, sans-serif; color: #4a4a4a; text-shadow: 0 0 2px #fff, 0 0 2px #fff; }
.map-btn {
  position: absolute;
  right: 8px;
  display: grid;
  place-items: center;
  width: 30px;
  height: 30px;
  background: #fff;
  box-shadow: 0 1px 3px rgba(0, 0, 0, .3);
}
.map-btn svg { width: 14px; height: 14px; fill: none; stroke: #666; stroke-width: 2; }
.full { top: 8px; border-radius: 2px; }
.move { bottom: 19px; border-radius: 50%; }
.move svg { width: 17px; height: 17px; }
.map-legal {
  position: absolute;
  right: 0;
  bottom: 0;
  display: flex;
  gap: 9px;
  height: 10px;
  padding: 0 4px 0 1px;
  background: rgba(245, 245, 245, .7);
  font-size: 9px;
  line-height: 10px;
  color: #000;
}

/* Place cards */
.places { display: grid; grid-template-columns: repeat(3, 1fr); gap: 18px; }
.place-head { display: flex; align-items: flex-start; justify-content: space-between; margin-bottom: 6px; }
h3 { font-size: 14px; line-height: 21px; font-weight: 600; }
.badge {
  height: 17px;
  padding: 0 9px;
  border-radius: 9px;
  background: #e3fae8;
  color: #2f7a38;
  font-size: 9px;
  line-height: 17px;
  font-weight: 500;
}
.line { display: flex; align-items: center; gap: 6px; color: var(--muted); }
.address { align-items: flex-start; margin-bottom: 12px; }
.address .icon { margin-top: 2px; }
.contact { display: flex; flex-direction: column; gap: 6px; margin-bottom: 12px; }
.stats { display: flex; gap: 12px; margin-bottom: 12px; padding-top: 12px; border-top: 1px solid var(--line); color: var(--muted); }
.actions { display: flex; gap: 6px; }

.footer {
  display: flex;
  align-items: center;
  justify-content: center;
  gap: 17px;
  height: 33px;
  padding: 2px 4px 0 18px;
  border-top: 1px solid var(--line);
  font-size: 9px;
  color: var(--muted);
}

/* Development badge over the lower left corner */
.devtools {
  position: fixed;
  left: 7px;
  bottom: 12px;
  width: 28px;
  height: 28px;
  border: 1px solid #111;
  border-radius: 50%;
  background: #2e2e2e;
  box-shadow: inset 0 0 0 1px #555, 0 6px 14px rgba(0, 0, 0, .15);
}
.devtools svg { display: block; width: 26px; height: 26px; fill: none; stroke: #fff; stroke-width: 1; }
.corner { position: fixed; left: 0; bottom: 0; width: 6px; height: 6px; background: linear-gradient(45deg, #0a0a45 50%, transparent 50%); }
```
